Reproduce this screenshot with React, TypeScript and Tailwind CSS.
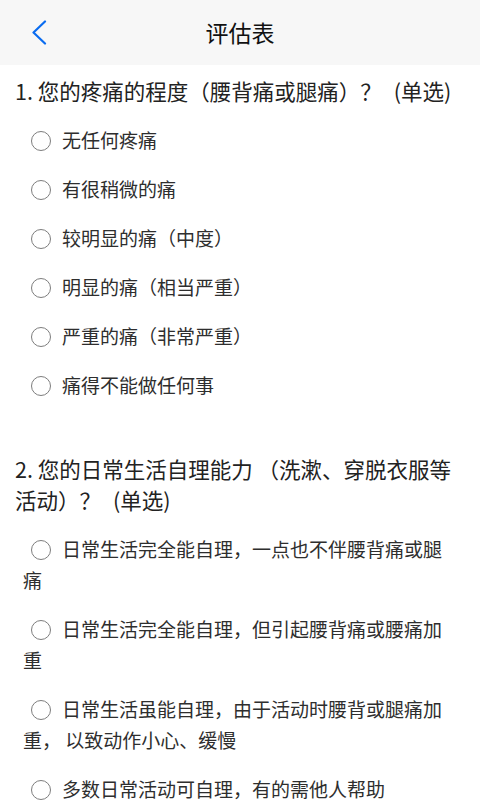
import React from "react";

const font = { fontFamily: '"Noto Sans CJK SC", "Noto Sans", sans-serif' };

function Circle() {
  return (
    <span className="inline-block align-middle ml-[8px] mr-[11px] w-[20px] h-[20px] rounded-full border-[1.7px] border-[#7d7d7d] -mt-[3px]" />
  );
}

function Option({ text }: { text: string }) {
  return (
    <div className="mt-[18px] pl-[23px] pr-[22px] text-[19px] leading-[31px] text-[#2e2e2e]">
      <Circle />
      {text}
    </div>
  );
}

export default function App() {
  const q1 = [
    "无任何疼痛",
    "有很稍微的痛",
    "较明显的痛（中度）",
    "明显的痛（相当严重）",
    "严重的痛（非常严重）",
    "痛得不能做任何事",
  ];
  const q2 = [
    "日常生活完全能自理，一点也不伴腰背痛或腿痛",
    "日常生活完全能自理，但引起腰背痛或腰痛加重",
    "日常生活虽能自理，由于活动时腰背或腿痛加重， 以致动作小心、缓慢",
    "多数日常活动可自理，有的需他人帮助",
  ];
  return (
    <div className="w-[480px] h-[800px] bg-white overflow-hidden" style={font}>
      <div className="relative h-[65px] bg-[#f7f7f7] flex items-center justify-center">
        <svg
          className="absolute left-[30px] top-[20px]"
          width="18"
          height="25"
          viewBox="0 0 18 25"
          fill="none"
        >
          <path d="M15 1.5 L3.5 12.5 L15 23.5" stroke="#0a6cf0" strokeWidth="2.2" strokeLinecap="round" strokeLinejoin="round" />
        </svg>
        <span className="text-[23px] text-[#111111] leading-none -mt-[1px]">评估表</span>
      </div>
      <div className="pt-[10px]">
        <div className="px-[15px] text-[21.5px] leading-[31px] text-[#222222]">
          1. 您的疼痛的程度（腰背痛或腿痛）？<span className="ml-[12px]">(单选)</span>
        </div>
        {q1.map((t) => (
          <Option key={t} text={t} />
        ))}
        <div className="mt-[53px] pl-[15px] pr-[26px] text-[21.5px] leading-[31px] text-[#222222]">
          2. 您的日常生活自理能力 （洗漱、穿脱衣服等活动）？<span className="ml-[12px]">(单选)</span>
        </div>
        {q2.map((t) => (
          <Option key={t} text={t} />
        ))}
      </div>
    </div>
  );
}
